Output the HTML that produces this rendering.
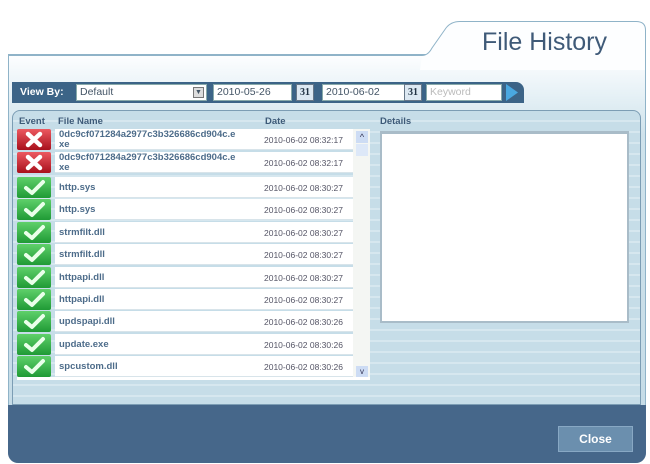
<!DOCTYPE html><html><head><style>
*{margin:0;padding:0;box-sizing:border-box}
body{width:650px;height:464px;background:#fff;position:relative;overflow:hidden;font-family:"Liberation Sans",sans-serif}
.abs{position:absolute}
.panel{left:8px;top:54px;width:638px;height:408px;border:1px solid #8fb3c8;border-radius:0 0 10px 10px;background:linear-gradient(#fdfeff 0,#e6f1f6 40px,#cfe2eb 80px,#c4dbe6 100%);}
.title{left:482px;top:28px;font-size:25px;color:#3f5a78;}
.bar{left:12px;top:82px;width:512px;height:21px;background:#3c6487;border-radius:0 8px 0 0}
.inp{position:absolute;top:2px;height:17px;background:#fff;border:1px solid #8aa;font-size:10.5px;color:#456;padding:2px 3px;line-height:11px}
.cal{position:absolute;top:2px;width:18px;height:17px;background:#dce8f2;border:1px solid #678;font:bold 10px "Liberation Serif",serif;color:#234;text-align:center;line-height:15px}
.inner{left:12px;top:110px;width:629px;height:295px;border:1px solid #7c9db4;border-radius:8px 8px 0 0;background:repeating-linear-gradient(#c6dde8 0,#c6dde8 9px,#d6e7ef 9px,#d6e7ef 11px)}
.hd{top:116px;font-size:9.5px;font-weight:bold;color:#3d5a78}
.row{position:absolute;left:17px;width:336px;height:21px}
.ic{position:absolute;left:0;top:0;width:34px;height:21px;border-radius:2px}
.ok{background:linear-gradient(#5fd06a,#1f9a35)}
.no{background:linear-gradient(#ec5960,#a8101c)}
.nm{position:absolute;left:38px;top:0;width:207px;height:21px;background:#fff;font-size:9.5px;font-weight:bold;color:#4d6c8a;padding:6px 4px;line-height:10px;border-bottom:1px solid #d8e4ea}
.dt{position:absolute;left:245px;top:0;width:91px;height:21px;background:#fff;font-size:8.5px;color:#556;padding:6px 2px;border-bottom:1px solid #d8e4ea}
.bottom{left:8px;top:405px;width:638px;height:58px;background:#46678a;border-radius:0 0 10px 10px}
.close{left:558px;top:426px;width:75px;height:26px;background:#6b8fae;border:1px solid #88a8c4;color:#fff;font-weight:bold;font-size:12px;text-align:center;line-height:24px}
</style></head><body>
<div class="abs panel"></div>
<svg class="abs" style="left:0;top:0" width="650" height="70"><path d="M422 55.5 Q428 55.5 432 48 L446 28 Q451 21.5 460 21.5 H636 Q645 21.5 645 30 V70 H420Z" fill="#fdfeff"/><path d="M9 55.5 H422 Q428 55.5 432 48 L446 28 Q451 21.5 460 21.5 H636 Q645.5 21.5 645.5 30 V70" fill="none" stroke="#8fb3c8"/></svg>
<div class="abs title">File History</div>
<div class="abs bar">
<div style="position:absolute;left:8px;top:4px;color:#fff;font-weight:bold;font-size:10.5px">View By:</div>
<div class="inp" style="left:64px;width:131px">Default<span style="position:absolute;right:2px;top:2px;width:11px;height:11px;background:#ddd;border:1px solid #777;font-size:7px;line-height:9px;text-align:center">▼</span></div>
<div class="inp" style="left:201px;width:79px">2010-05-26</div>
<div class="cal" style="left:284px">31</div>
<div class="inp" style="left:310px;width:86px">2010-06-02</div>
<div class="cal" style="left:392px">31</div>
<div class="inp" style="left:414px;width:76px;color:#bbb">Keyword</div>
<svg style="position:absolute;left:493px;top:2px" width="14" height="17"><path d="M1 0 L13 8.5 L1 17Z" fill="#4aa8e0"/></svg>
</div>
<div class="abs inner"></div>
<div class="abs hd" style="left:19px">Event</div>
<div class="abs hd" style="left:58px">File Name</div>
<div class="abs hd" style="left:265px">Date</div>
<div class="abs hd" style="left:380px">Details</div>
<div class="abs" style="left:380px;top:131px;width:249px;height:192px;background:#fff;border:2px solid #a9bcc8;border-top-width:3px"></div>
<div class="abs" style="left:353px;top:129px;width:17px;height:250px;background:#f4f6f3"></div>
<div class="abs" style="left:356px;top:131px;width:12px;height:12px;background:#cddcf4;color:#335;font-size:9px;text-align:center;line-height:12px">^</div>
<div class="abs" style="left:356px;top:144px;width:12px;height:12px;background:#dde8f8"></div>
<div class="abs" style="left:356px;top:366px;width:12px;height:12px;background:#cddcf4;color:#335;font-size:8px;text-align:center;line-height:12px">v</div>
<div class="abs" style="left:17px;top:377px;width:353px;height:3px;background:#fff"></div>

<div class="row" style="top:129px"><div class="ic no"></div><div class="nm" style="padding-top:1px">0dc9cf071284a2977c3b326686cd904c.e<br>xe</div><div class="dt">2010-06-02 08:32:17</div></div>
<div class="row" style="top:152px"><div class="ic no"></div><div class="nm" style="padding-top:1px">0dc9cf071284a2977c3b326686cd904c.e<br>xe</div><div class="dt">2010-06-02 08:32:17</div></div>
<div class="row" style="top:177px"><div class="ic ok"></div><div class="nm">http.sys</div><div class="dt">2010-06-02 08:30:27</div></div>
<div class="row" style="top:199px"><div class="ic ok"></div><div class="nm">http.sys</div><div class="dt">2010-06-02 08:30:27</div></div>
<div class="row" style="top:222px"><div class="ic ok"></div><div class="nm">strmfilt.dll</div><div class="dt">2010-06-02 08:30:27</div></div>
<div class="row" style="top:244px"><div class="ic ok"></div><div class="nm">strmfilt.dll</div><div class="dt">2010-06-02 08:30:27</div></div>
<div class="row" style="top:267px"><div class="ic ok"></div><div class="nm">httpapi.dll</div><div class="dt">2010-06-02 08:30:27</div></div>
<div class="row" style="top:289px"><div class="ic ok"></div><div class="nm">httpapi.dll</div><div class="dt">2010-06-02 08:30:27</div></div>
<div class="row" style="top:311px"><div class="ic ok"></div><div class="nm">updspapi.dll</div><div class="dt">2010-06-02 08:30:26</div></div>
<div class="row" style="top:334px"><div class="ic ok"></div><div class="nm">update.exe</div><div class="dt">2010-06-02 08:30:26</div></div>
<div class="row" style="top:356px"><div class="ic ok"></div><div class="nm">spcustom.dll</div><div class="dt">2010-06-02 08:30:26</div></div>

<svg class="abs" style="left:17px;top:129px" width="34" height="250">
<g stroke="#fff" stroke-width="4.5" stroke-linecap="round" fill="none">
<path d="M11 5 L23 16 M23 5 L11 16"/>
<path transform="translate(0,23)" d="M11 5 L23 16 M23 5 L11 16"/>
</g>
<g stroke="#eaffea" stroke-width="4" stroke-linecap="round" stroke-linejoin="round" fill="none">
<path transform="translate(0,48)" d="M9 11 L15 16 L26 5"/>
<path transform="translate(0,70)" d="M9 11 L15 16 L26 5"/>
<path transform="translate(0,93)" d="M9 11 L15 16 L26 5"/>
<path transform="translate(0,115)" d="M9 11 L15 16 L26 5"/>
<path transform="translate(0,138)" d="M9 11 L15 16 L26 5"/>
<path transform="translate(0,160)" d="M9 11 L15 16 L26 5"/>
<path transform="translate(0,182)" d="M9 11 L15 16 L26 5"/>
<path transform="translate(0,205)" d="M9 11 L15 16 L26 5"/>
<path transform="translate(0,227)" d="M9 11 L15 16 L26 5"/>
</g></svg>
<div class="abs bottom"></div>
<div class="abs close">Close</div>
</body></html>
